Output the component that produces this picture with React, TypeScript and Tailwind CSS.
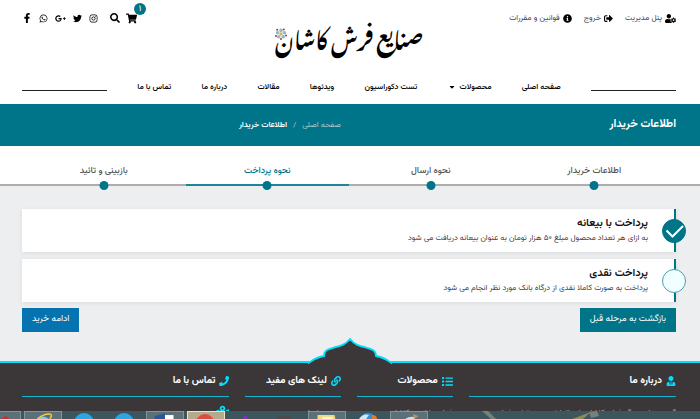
import type { ReactNode } from 'react';
import {
  FaCaretDown,
  FaFacebookF,
  FaGooglePlusG,
  FaInfoCircle,
  FaInstagram,
  FaLink,
  FaList,
  FaMapMarkedAlt,
  FaPhone,
  FaSearch,
  FaShoppingCart,
  FaSignOutAlt,
  FaTwitter,
  FaUserCog,
  FaUserTie,
  FaWhatsapp,
} from 'react-icons/fa';

const userLinks = [
  { label: 'پنل مدیریت', icon: <FaUserCog size={11} /> },
  { label: 'خروج', icon: <FaSignOutAlt size={9} /> },
  { label: 'قوانین و مقررات', icon: <FaInfoCircle size={9} /> },
];

const socialLinks = [
  { label: 'Facebook', icon: <FaFacebookF size={10} /> },
  { label: 'WhatsApp', icon: <FaWhatsapp size={9} /> },
  { label: 'Google Plus', icon: <FaGooglePlusG size={11} /> },
  { label: 'Twitter', icon: <FaTwitter size={9} /> },
  { label: 'Instagram', icon: <FaInstagram size={9} /> },
];

const navItems = [
  { label: 'صفحه اصلی' },
  { label: 'محصولات', hasMenu: true },
  { label: 'تست دکوراسیون' },
  { label: 'ویدئوها' },
  { label: 'مقالات' },
  { label: 'درباره ما' },
  { label: 'تماس با ما' },
];

const steps = [
  { label: 'اطلاعات خریدار' },
  { label: 'نحوه ارسال' },
  { label: 'نحوه پرداخت', active: true },
  { label: 'بازبینی و تائید' },
];

const payments = [
  {
    id: 'deposit',
    title: 'پرداخت با بیعانه',
    text: 'به ازای هر تعداد محصول مبلغ ۵۰ هزار تومان به عنوان بیعانه دریافت می شود',
    checked: true,
  },
  {
    id: 'cash',
    title: 'پرداخت نقدی',
    text: 'پرداخت به صورت کاملا نقدی از درگاه بانک مورد نظر انجام می شود',
    checked: false,
  },
];

function Logo() {
  return (
    <a href="#" className="relative block font-['Noto_Nastaliq_Urdu','DejaVu_Sans',serif] text-[22px] leading-[72px] font-bold whitespace-nowrap text-black">
      صنایع فرش کاشان
      <svg viewBox="0 0 12 12" className="absolute top-7 left-0 size-3" aria-hidden="true">
        <g fill="#8fb9cc">
          <circle cx="6" cy="2.4" r="1.8" />
          <circle cx="9.4" cy="4.8" r="1.8" />
          <circle cx="8.2" cy="8.8" r="1.8" />
          <circle cx="3.8" cy="8.8" r="1.8" />
          <circle cx="2.6" cy="4.8" r="1.8" />
        </g>
        <circle cx="6" cy="6" r="1.7" fill="#e3b548" />
        <g fill="#9b3f2f">
          <circle cx="2.2" cy="1.8" r="1" />
          <circle cx="8.8" cy="1.4" r="1" />
          <circle cx="11" cy="7.4" r="1" />
          <circle cx="6" cy="11" r="1" />
          <circle cx="1" cy="8" r="1" />
        </g>
      </svg>
    </a>
  );
}

function Header() {
  return (
    <header className="pr-6 pl-[22px]">
      <div className="grid h-[76px] grid-cols-[1fr_auto_1fr] items-start">
        <div className="flex gap-3 pt-2.5">
          {userLinks.map((link) => (
            <a key={link.label} href="#" className="flex items-center gap-[3px] text-[8px] leading-4 whitespace-nowrap text-[#444]">
              <span className="text-black">{link.icon}</span>
              {link.label}
            </a>
          ))}
        </div>
        <Logo />
        <div dir="ltr" className="flex items-center pt-2.5 text-black">
          <div className="flex h-4 items-center gap-[7px]">
            {socialLinks.map((link) => (
              <a key={link.label} href="#" aria-label={link.label}>
                {link.icon}
              </a>
            ))}
          </div>
          <button type="button" aria-label="جستجو" className="ml-3">
            <FaSearch size={10} />
          </button>
          <a href="#" aria-label="سبد خرید" className="relative ml-1.5">
            <FaShoppingCart size={11} />
            <span className="absolute -top-2.5 left-2 flex size-3 items-center justify-center rounded-full bg-[#00758a] text-[9px] leading-3 text-white">
              ۱
            </span>
          </a>
        </div>
      </div>
      <nav className="flex h-7 items-start justify-between">
        <span className="mt-3.5 w-[13%] border-t border-[#222]" />
        {navItems.map((item) => (
          <a key={item.label} href="#" className="flex items-center gap-1 text-[8px] leading-[22px] font-medium whitespace-nowrap text-black">
            {item.label}
            {item.hasMenu && <FaCaretDown size={8} />}
          </a>
        ))}
        <span className="mt-3.5 w-[13%] border-t border-[#222]" />
      </nav>
    </header>
  );
}

function Banner() {
  return (
    <div className="grid grid-cols-2 items-center gap-4 bg-[#00758a] pr-6 pl-[22px] text-white">
      <h1 className="text-[11px] leading-[42px] font-bold">اطلاعات خریدار</h1>
      <div className="flex gap-1.5 text-[8px] leading-[42px]">
        <a href="#" className="text-[#a9c5cb]">صفحه اصلی</a>
        <span className="text-[#a9c5cb]">/</span>
        <span className="font-semibold">اطلاعات خریدار</span>
      </div>
    </div>
  );
}

function Steps() {
  return (
    <div className="border-b-2 border-[#adadad] bg-white pr-6 pl-[22px]">
      <ol className="-mb-0.5 grid grid-cols-4">
        {steps.map((step) => (
          <li
            key={step.label}
            className={`relative border-b-2 pt-[17px] pb-[5px] text-center text-[9px] leading-4 font-medium ${
              step.active ? 'border-[#1b8799] text-[#00758a]' : 'border-[#adadad] text-[#555]'
            }`}
          >
            {step.label}
            <span className="absolute -bottom-1.5 left-1/2 size-[9px] -translate-x-1/2 rounded-full bg-[#00758a]" />
          </li>
        ))}
      </ol>
    </div>
  );
}

function PaymentOption({ id, title, text, checked }: (typeof payments)[number]) {
  return (
    <label
      htmlFor={id}
      className="relative block cursor-pointer border-r-2 border-[#00758a] bg-white pt-[7px] pr-[26px] pb-2 shadow-[0_1px_5px_rgba(0,0,0,0.08)]"
    >
      <input id={id} type="radio" name="payment" defaultChecked={checked} className="peer sr-only" />
      <span className="absolute top-1/2 -right-3 size-6 -translate-y-1/2 rounded-full border border-[#4a9fae] bg-[#f0ffff] peer-checked:border-[#00758a] peer-checked:bg-[#00758a]" />
      <svg
        viewBox="0 0 24 24"
        className="absolute top-1/2 -right-3 size-6 -translate-y-1/2 opacity-0 peer-checked:opacity-100"
        fill="none"
        stroke="white"
        strokeWidth="2"
        aria-hidden="true"
      >
        <path d="M4.5 11.5 10.5 17.5 21 7" />
      </svg>
      <span className="block text-[11px] leading-4 font-semibold text-[#111]">{title}</span>
      <span className="block text-[8px] leading-3 text-[#444]">{text}</span>
    </label>
  );
}

function FooterColumn({ title, icon, className, children }: { title: string; icon: ReactNode; className: string; children: ReactNode }) {
  return (
    <section className={className}>
      <h2 className="flex items-center gap-1 border-b border-[#12b5cf] pt-2 pb-[5px] text-[10px] leading-5 font-bold whitespace-nowrap text-white">
        <span className="text-[#00dfff]">{icon}</span>
        {title}
      </h2>
      <div className="mt-2 text-[8px] leading-4 whitespace-nowrap text-[#aaa]">{children}</div>
    </section>
  );
}

function Footer() {
  return (
    <footer className="relative mt-[29px] flex-1 border-t-2 border-[#00dfff] bg-[#3b3738]">
      <svg viewBox="0 0 84 28" className="absolute -top-[26px] left-1/2 h-7 w-[84px] -translate-x-1/2" aria-hidden="true">
        <path
          d="M0 28V26C5 23 8 20 16 19C16 13 21 12 26 10.500C33 9 37 8 42 2C47 8 51 9 58 10.500C63 12 68 13 68 19C76 20 79 23 84 26V28Z"
          fill="#3b3738"
        />
        <path
          d="M0 26.500C5 23 8 20 16 19C16 13 21 12 26 10.500C33 9 37 8 42 2C47 8 51 9 58 10.500C63 12 68 13 68 19C76 20 79 23 84 26.500"
          fill="none"
          stroke="#00dfff"
          strokeWidth="1.800"
        />
      </svg>
      <div className="grid grid-cols-12 gap-4 pr-6 pl-[22px]">
        <FooterColumn className="col-span-4" title="درباره ما" icon={<FaUserTie size={10} />}>
          گروه صنایع بزرگ فرش کاشان با سالها تجربه در تولید فرش
        </FooterColumn>
        <FooterColumn className="col-span-2" title="محصولات" icon={<FaList size={11} />}>
          فرش ماشینی کاشان
        </FooterColumn>
        <FooterColumn className="col-span-2" title="لینک های مفید" icon={<FaLink size={10} />}>
          صفحه اصلی
        </FooterColumn>
        <FooterColumn className="col-span-4" title="تماس با ما" icon={<FaPhone size={10} />}>
          <FaMapMarkedAlt size={13} color="#00dfff" className="mt-1" />
        </FooterColumn>
      </div>
    </footer>
  );
}

function Taskbar() {
  const slot = 'h-2 w-[38px] overflow-hidden border-x border-t';
  return (
    <div dir="ltr" className="relative flex h-2 shrink-0 gap-[3px] overflow-hidden bg-[#3d565e]">
      <div className={`${slot} -ml-[17px] border-[#82949a] bg-[#5c7077]`}>
        <svg viewBox="0 0 38 8" className="h-2 w-full"><path d="M17 8 23 4 28 8Z" fill="#e3202c" /></svg>
      </div>
      <div className={`${slot} border-[#82949a] bg-[#5c7077]`}>
        <svg viewBox="0 0 38 8" className="h-2 w-full">
          <path d="M13 8Q19 1 26 8" fill="#79c7f2" />
          <path d="M13 7Q21 1 27 2Q29 4 26 7" fill="none" stroke="#f5cc3d" strokeWidth="1.500" />
        </svg>
      </div>
      <svg viewBox="0 0 78 8" className="h-2 w-[78px]">
        <circle cx="19" cy="12" r="10" fill="#2da5e1" />
        <circle cx="59" cy="12" r="10" fill="#2da5e1" />
      </svg>
      <div className={`${slot} border-[#82949a] bg-[#5c7077]`}>
        <svg viewBox="0 0 38 8" className="h-2 w-full">
          <path d="M18 3H28V8H18Z" fill="white" />
          <path d="M8 4 19 1V8H8Z" fill="#2b579a" />
        </svg>
      </div>
      <div className={`${slot} border-[#efe5c0] bg-[#b5ab8c]`}>
        <svg viewBox="0 0 38 8" className="h-2 w-full"><circle cx="18" cy="12" r="10" fill="#df4b3f" /></svg>
      </div>
      <svg viewBox="0 0 77 8" className="h-2 w-[77px]">
        <path d="M14 8 18 4 20 8Z" fill="#7e2fc2" />
        <path d="M49 8V6Q58 4 63 6V8Z" fill="#4b4b4d" />
      </svg>
      <div className={`${slot} border-[#82949a] bg-[#5c7077]`}>
        <svg viewBox="0 0 38 8" className="h-2 w-full">
          <path d="M9 3H27L28 8H9Z" fill="#efd982" />
          <path d="M14 5H25V8H14Z" fill="#fff3be" />
        </svg>
      </div>
      <svg viewBox="0 0 38 8" className="h-2 w-[38px]">
        <circle cx="19" cy="10" r="8" fill="#398fce" />
        <path d="M10 8Q14 2 20 4L17 8Z" fill="#cfeaf6" />
        <path d="M23 4Q28 4 28 8H23Z" fill="#df7b25" />
      </svg>
      <div className={`${slot} border-[#82949a] bg-[#5c7077]`}>
        <svg viewBox="0 0 38 8" className="h-2 w-full">
          <path d="M14 8Q18 4 25 5V8Z" fill="#c5dde5" />
          <path d="M23 2 29 4 25 7Z" fill="#c98e58" />
        </svg>
      </div>
      <svg viewBox="0 0 170 8" className="h-2 w-[170px]">
        <path d="M51 0H57L65 8H60ZM158 1 166 0 168 5 160 7Z" fill="#74827d" />
        <path d="M141 8 160 1 152 8Z" fill="#898b5b" />
      </svg>
    </div>
  );
}

export default function App() {
  return (
    <div dir="rtl" className="flex h-screen flex-col overflow-hidden bg-[#edeef0] font-['Vazirmatn','DejaVu_Sans',sans-serif]">
      <div className="bg-white">
        <Header />
      </div>
      <Banner />
      <Steps />
      <main className="pt-[23px] pr-6 pl-[22px]">
        <form>
          <div className="flex flex-col gap-[7px]">
            {payments.map((payment) => (
              <PaymentOption key={payment.id} {...payment} />
            ))}
          </div>
          <div className="mt-1.5 flex items-center justify-between">
            <button type="button" className="h-6 bg-[#00758a] px-2.5 text-[9px] text-white">
              بازگشت به مرحله قبل
            </button>
            <button type="submit" className="h-6 bg-[#0473b0] px-2.5 text-[9px] text-white">
              ادامه خرید
            </button>
          </div>
        </form>
      </main>
      <div className="flex min-h-0 flex-1 flex-col">
        <Footer />
      </div>
      <Taskbar />
    </div>
  );
}
